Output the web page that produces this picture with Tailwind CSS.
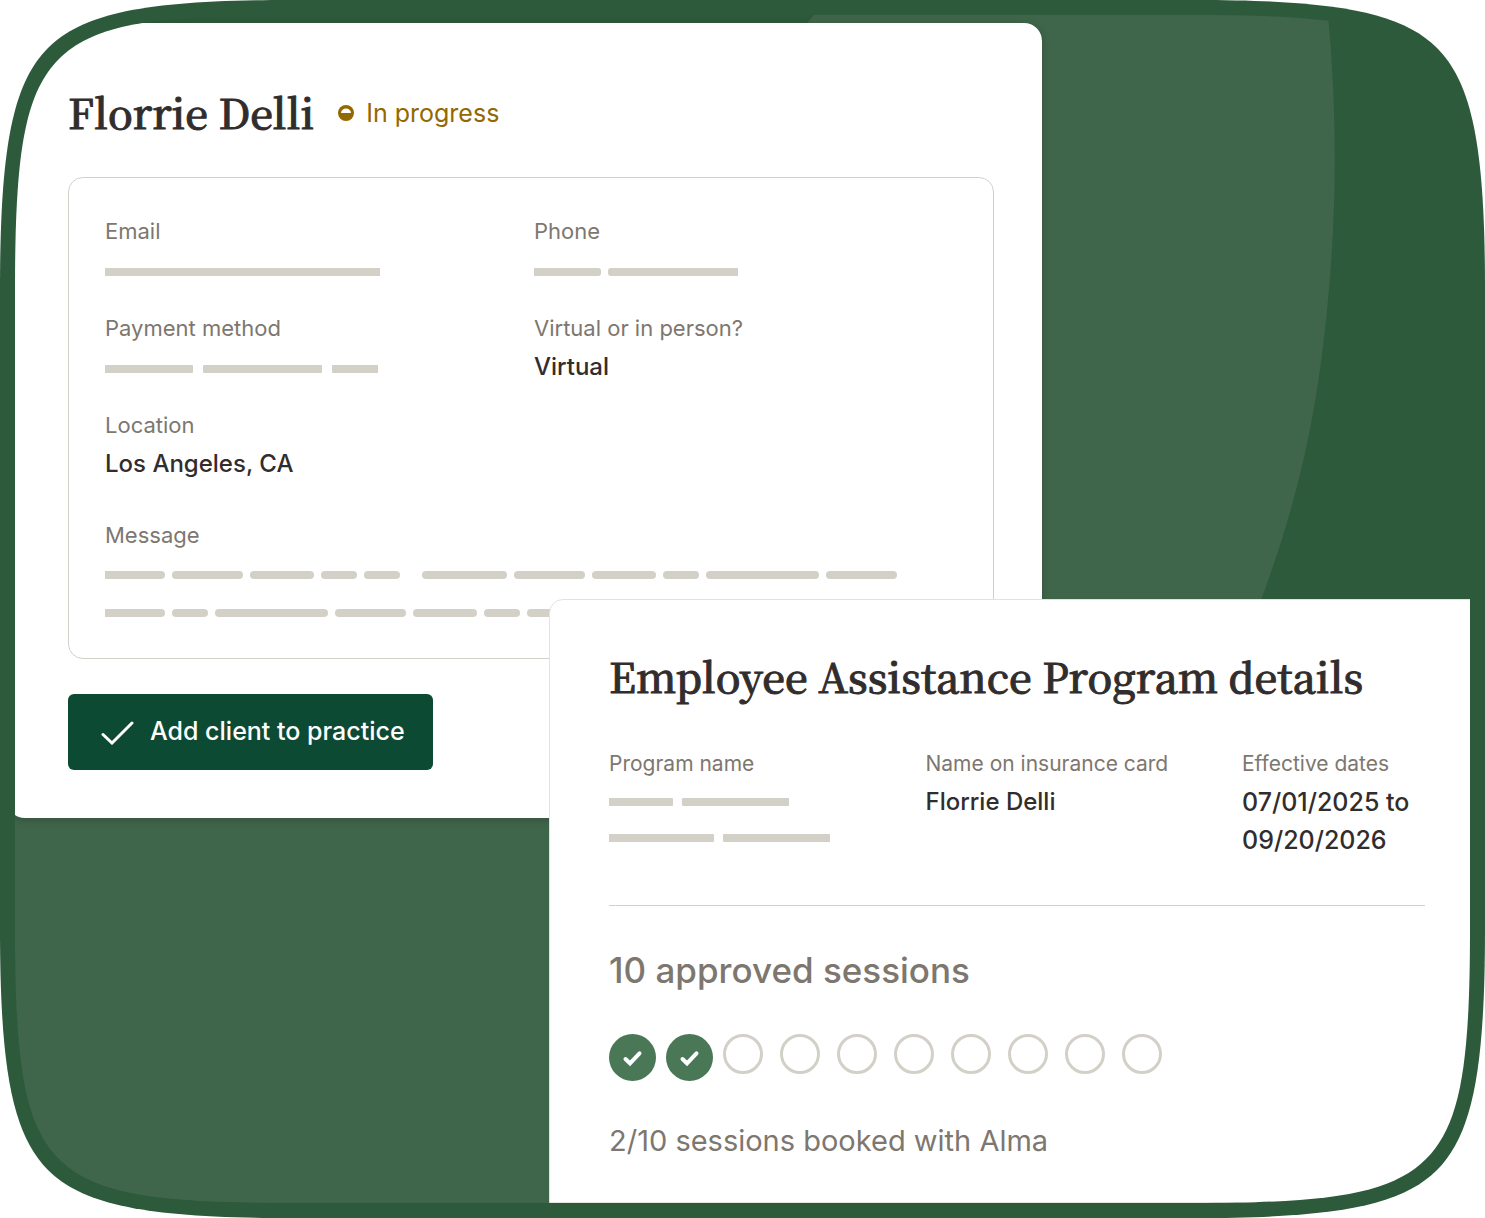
<!DOCTYPE html>
<html lang="en">
<head>
    <meta charset="UTF-8">
    <meta name="viewport" content="width=device-width, initial-scale=1.0">
    <title>Client details</title>
    <script src="https://cdn.jsdelivr.net/npm/@tailwindcss/browser@4"></script>
</head>
<body class="bg-white font-['Inter','Liberation_Sans',sans-serif] text-[#322d2d]">
    <main class="relative flex min-h-screen flex-col overflow-hidden p-[15px]">
        <!-- Green frame -->
        <svg class="absolute inset-0 h-full w-full" viewBox="0 0 1485 1218" preserveAspectRatio="none" aria-hidden="true">
            <defs>
                <clipPath id="panelShape" clipPathUnits="objectBoundingBox">
                    <path transform="scale(0.000687285 0.000841751)" d="M0 275 C0 140 9 79 44 44 C79 9 140 0 275 0 H1180 C1315 0 1376 9 1411 44 C1446 79 1455 140 1455 275 V913 C1455 1048 1446 1109 1411 1144 C1376 1179 1315 1188 1180 1188 H275 C140 1188 79 1179 44 1144 C9 1109 0 1048 0 913 Z"/>
                </clipPath>
            </defs>
            <path fill="#2d5a3b" d="M0 290 C0 150 12 84 48 48 C84 12 150 0 290 0 H1195 C1335 0 1401 12 1437 48 C1473 84 1485 150 1485 290 V928 C1485 1068 1473 1134 1437 1170 C1401 1206 1335 1218 1195 1218 H290 C150 1218 84 1206 48 1170 C12 1134 0 1068 0 928 Z"/>
        </svg>

        <div class="relative flex flex-1 flex-col [clip-path:url(#panelShape)]">
            <svg class="absolute inset-0 h-full w-full" viewBox="15 15 1455 1188" preserveAspectRatio="none" aria-hidden="true">
                <path fill="#3f664a" d="M807 23 L814 15 H1328 C1337 110 1337 205 1328 300 C1318 405 1302 490 1261 600 L1000 1203 H15 V700 Z"/>
            </svg>

            <!-- Client card -->
            <section class="relative mr-[428px] -ml-2 mt-2 rounded-[18px] bg-white pt-16 pr-12 pb-12 pl-[61px] shadow-[0_2px_10px_rgba(0,0,0,0.2)]">
                <div class="flex items-center gap-6">
                    <h1 class="pb-1.5 font-['Noto_Serif_CJK_SC','Noto_Serif',serif] text-[41px] leading-[50px] font-medium [-webkit-text-stroke:1px_#322d2d]">Florrie Delli</h1>
                    <p class="flex items-center gap-3 pb-1 text-[25px] leading-[36px] text-[#946800]">
                        <svg class="size-4" viewBox="0 0 16 16" aria-hidden="true">
                            <circle cx="8" cy="8" r="8" fill="#946800"/>
                            <path d="M3 8 C3.3 1.9 12.7 1.9 13 8 Z" fill="#fff"/>
                        </svg>
                        In progress
                    </p>
                </div>

                <div class="mt-[34px] rounded-[15px] border border-[#d3d0c8] px-9 pt-[38px] pb-[26px]">
                    <dl class="grid grid-cols-2 gap-x-1.5 gap-y-[23px]">
                        <div>
                            <dt class="text-[22px] leading-[30px] text-[#7d776f]">Email</dt>
                            <dd class="mt-1 flex h-10 items-center pt-[3px]"><span class="h-2 w-[275px] bg-[#d3d0c8]"></span></dd>
                        </div>
                        <div>
                            <dt class="text-[22px] leading-[30px] text-[#7d776f]">Phone</dt>
                            <dd class="mt-1 flex h-10 items-center gap-[7px] pt-[3px]">
                                <span class="h-2 w-[67px] rounded-r-[3px] bg-[#d3d0c8]"></span>
                                <span class="h-2 w-[130px] rounded-l-[3px] bg-[#d3d0c8]"></span>
                            </dd>
                        </div>
                        <div>
                            <dt class="text-[22px] leading-[30px] text-[#7d776f]">Payment method</dt>
                            <dd class="mt-1 flex h-10 items-center gap-2.5 pt-[3px]">
                                <span class="h-2 w-[88px] rounded-r-[1px] bg-[#d3d0c8]"></span>
                                <span class="h-2 w-[119px] rounded-[1px] bg-[#d3d0c8]"></span>
                                <span class="h-2 w-[46px] rounded-l-[1px] bg-[#d3d0c8]"></span>
                            </dd>
                        </div>
                        <div>
                            <dt class="text-[22px] leading-[30px] text-[#7d776f]">Virtual or in person?</dt>
                            <dd class="mt-1 text-[24px] leading-[40px] font-medium">Virtual</dd>
                        </div>
                        <div>
                            <dt class="text-[22px] leading-[30px] text-[#7d776f]">Location</dt>
                            <dd class="mt-1 text-[24px] leading-[40px] font-medium">Los Angeles, CA</dd>
                        </div>
                    </dl>

                    <h2 class="mt-9 text-[22px] leading-[30px] text-[#7d776f]">Message</h2>
                    <div class="mt-1.5">
                        <div class="flex h-[38px] items-center gap-[7px]">
                            <span class="h-2 w-[60px] rounded-r-full bg-[#d3d0c8]"></span>
                            <span class="h-2 w-[71px] rounded-full bg-[#d3d0c8]"></span>
                            <span class="h-2 w-16 rounded-full bg-[#d3d0c8]"></span>
                            <span class="h-2 w-9 rounded-full bg-[#d3d0c8]"></span>
                            <span class="h-2 w-9 rounded-full bg-[#d3d0c8]"></span>
                            <span class="ml-[15px] h-2 w-[85px] rounded-full bg-[#d3d0c8]"></span>
                            <span class="h-2 w-[71px] rounded-full bg-[#d3d0c8]"></span>
                            <span class="h-2 w-16 rounded-full bg-[#d3d0c8]"></span>
                            <span class="h-2 w-9 rounded-full bg-[#d3d0c8]"></span>
                            <span class="h-2 w-[113px] rounded-full bg-[#d3d0c8]"></span>
                            <span class="h-2 w-[71px] rounded-full bg-[#d3d0c8]"></span>
                        </div>
                        <div class="flex h-[38px] items-center gap-[7px]">
                            <span class="h-2 w-[60px] rounded-r-full bg-[#d3d0c8]"></span>
                            <span class="h-2 w-9 rounded-full bg-[#d3d0c8]"></span>
                            <span class="h-2 w-[113px] rounded-full bg-[#d3d0c8]"></span>
                            <span class="h-2 w-[71px] rounded-full bg-[#d3d0c8]"></span>
                            <span class="h-2 w-16 rounded-full bg-[#d3d0c8]"></span>
                            <span class="h-2 w-9 rounded-full bg-[#d3d0c8]"></span>
                            <span class="h-2 w-[71px] rounded-full bg-[#d3d0c8]"></span>
                        </div>
                    </div>
                </div>

                <button type="button" class="mt-[35px] flex h-[76px] items-center gap-4 rounded-md bg-[#0d4a33] pr-7 pl-8 text-[25px] font-medium text-white">
                    <svg class="h-[26px] w-[34px]" viewBox="0 0 34 26" fill="none" stroke="#fff" stroke-width="3" stroke-linecap="round" aria-hidden="true">
                        <path d="M3 15.5 L12 24 L32 4"/>
                    </svg>
                    Add client to practice
                </button>
            </section>

            <!-- Program card -->
            <section class="relative -mt-[219px] -mr-px ml-[534px] flex-1 rounded-tl-[14px] border border-[#e4e2dd] bg-white pt-[51px] pr-[45px] pb-10 pl-[59px]">
                <h2 class="pb-1.5 font-['Noto_Serif_CJK_SC','Noto_Serif',serif] text-[41px] leading-[50px] font-medium whitespace-nowrap [-webkit-text-stroke:1px_#322d2d]">Employee Assistance Program details</h2>
                <dl class="mt-[42px] grid grid-cols-[1fr_1fr_183px]">
                    <div>
                        <dt class="text-[21px] leading-[30px] text-[#7d776f]">Program name</dt>
                        <dd class="mt-1">
                            <div class="flex h-[38px] items-center gap-[9px]">
                                <span class="h-2 w-16 rounded-r-[1px] bg-[#d3d0c8]"></span>
                                <span class="h-2 w-[107px] rounded-l-[1px] bg-[#d3d0c8]"></span>
                            </div>
                            <div class="flex h-[34px] items-center gap-[9px]">
                                <span class="h-2 w-[105px] rounded-r-[1px] bg-[#d3d0c8]"></span>
                                <span class="h-2 w-[107px] rounded-l-[1px] bg-[#d3d0c8]"></span>
                            </div>
                        </dd>
                    </div>
                    <div>
                        <dt class="text-[21px] leading-[30px] text-[#7d776f]">Name on insurance card</dt>
                        <dd class="mt-1 text-[24px] leading-[38px] font-medium">Florrie Delli</dd>
                    </div>
                    <div>
                        <dt class="text-[21px] leading-[30px] text-[#7d776f]">Effective dates</dt>
                        <dd class="mt-1 text-[25px] leading-[38px] font-medium">07/01/2025 to 09/20/2026</dd>
                    </div>
                </dl>
                <hr class="mt-[46px] border-[#d3d0c8]">

                <h3 class="mt-[42px] text-[35px] leading-[44px] font-medium text-[#7d776f]">10 approved sessions</h3>
                <div class="mt-[42px] flex h-[47px] items-start gap-2.5" role="img" aria-label="2 of 10 sessions booked">
                    <svg class="size-[47px]" viewBox="0 0 47 47" fill="none">
                        <circle cx="23.5" cy="23.5" r="23.5" fill="#4a7756"/>
                        <path d="M16.5 25 L21 29.3 L30.5 19.3" stroke="#fff" stroke-width="4" stroke-linecap="round"/>
                    </svg>
                    <svg class="size-[47px]" viewBox="0 0 47 47" fill="none">
                        <circle cx="23.5" cy="23.5" r="23.5" fill="#4a7756"/>
                        <path d="M16.5 25 L21 29.3 L30.5 19.3" stroke="#fff" stroke-width="4" stroke-linecap="round"/>
                    </svg>
                    <div class="flex gap-[17px]">
                        <span class="size-10 rounded-full border-3 border-[#d3d0c8]"></span>
                        <span class="size-10 rounded-full border-3 border-[#d3d0c8]"></span>
                        <span class="size-10 rounded-full border-3 border-[#d3d0c8]"></span>
                        <span class="size-10 rounded-full border-3 border-[#d3d0c8]"></span>
                        <span class="size-10 rounded-full border-3 border-[#d3d0c8]"></span>
                        <span class="size-10 rounded-full border-3 border-[#d3d0c8]"></span>
                        <span class="size-10 rounded-full border-3 border-[#d3d0c8]"></span>
                        <span class="size-10 rounded-full border-3 border-[#d3d0c8]"></span>
                    </div>
                </div>
                <p class="mt-10 text-[29px] leading-[40px] text-[#7d776f]">2/10 sessions booked with Alma</p>
            </section>
        </div>
    </main>
</body>
</html>
